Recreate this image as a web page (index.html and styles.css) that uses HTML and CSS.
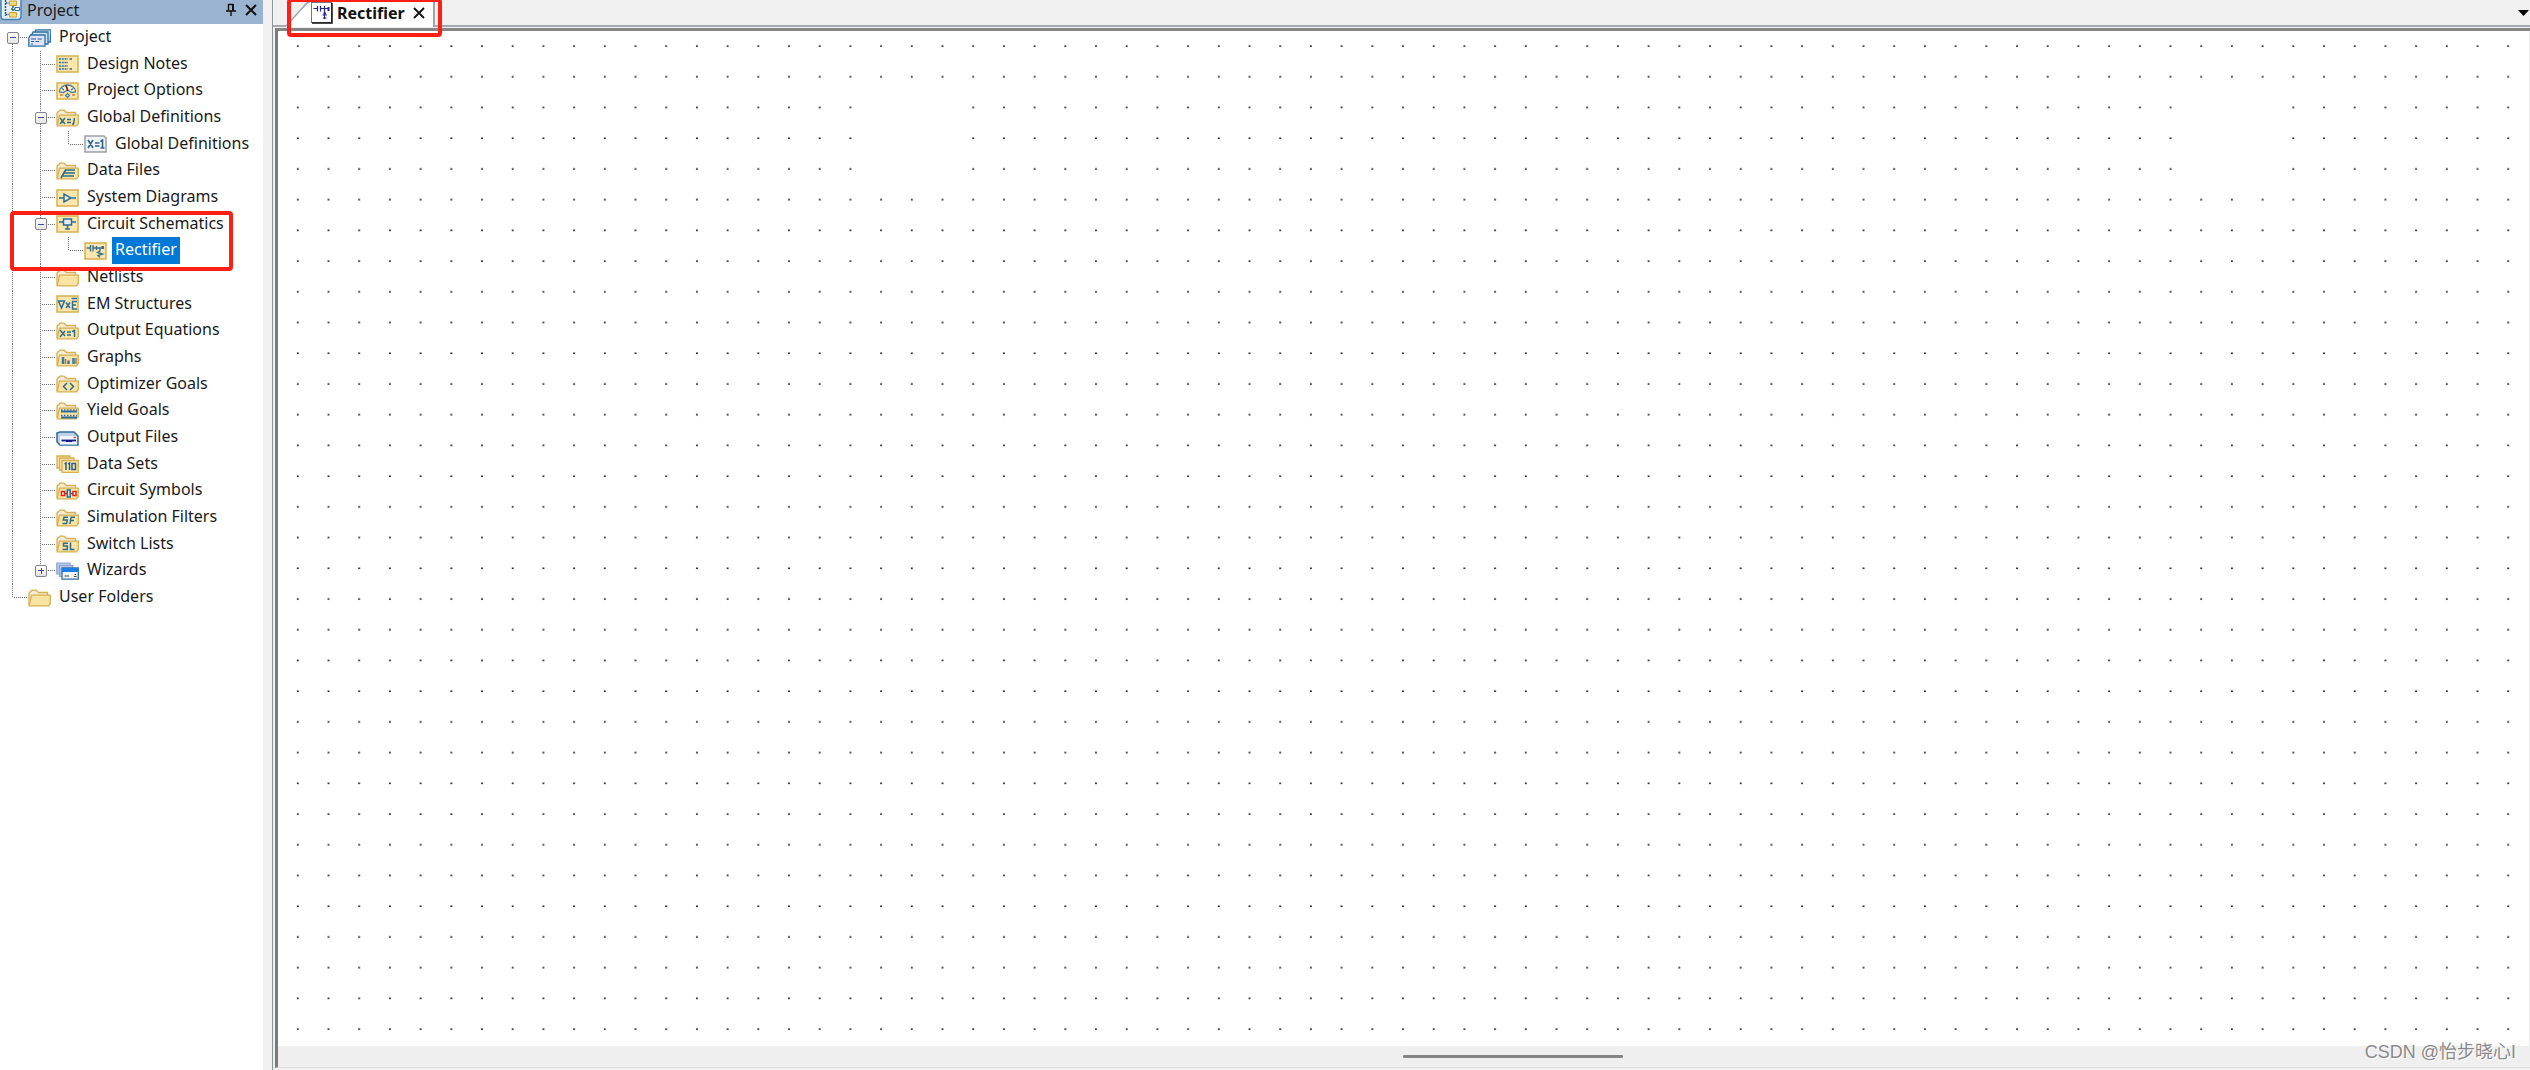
FILE: index.html
```html
<!DOCTYPE html>
<html lang="en">
<head>
<meta charset="utf-8">
<title>Project - Rectifier</title>
<link rel="stylesheet" href="styles.css">
</head>
<body>
<svg class="sprite" aria-hidden="true">
  <symbol id="box" viewBox="0 0 23 18">
    <rect x="1" y="1" width="21" height="16" fill="#fbe6ad" stroke="#d6b052" stroke-width="1.5"/>
  </symbol>
  <symbol id="folder" viewBox="0 0 23 18">
    <path d="M1 16V4L4 1.2H8L10.500 3.500H19.500V8" fill="#f5ead2" stroke="#d6b052" stroke-width="1.3"/>
    <path d="M1.200 16.800L3.500 6.200H22.300V14.500L20.500 16.900Z" fill="#fbe3a4" stroke="#d6b052" stroke-width="1.3"/>
  </symbol>
  <symbol id="project" viewBox="0 0 23 18">
    <g fill="#cfe2f3" stroke="#2d6f9f" stroke-width="1.3">
      <path d="M6 4.500L8 .8H23L22.300 13H8Z"/>
      <path d="M3 7L5 3H20V15H5Z"/>
      <path d="M.8 9L2.500 6H17L17 17.200H.8Z" fill="#dfe3fb"/>
    </g>
    <path d="M3 10H8M9.500 10H14M3 12.500H6M7.500 12.500H11M3 15H5" stroke="#2d5f9f" stroke-width="1.2"/>
  </symbol>
  <symbol id="notes" viewBox="0 0 23 18">
    <use href="#box"/>
    <path d="M3 4H12M3 7.500H12M3 11H12M3 14H12" stroke="#2f6d8f" stroke-width="1.600" stroke-dasharray="2 .8"/>
    <path d="M13.500 4H16M13.500 14H16" stroke="#2f6d8f" stroke-width="1.400"/>
  </symbol>
  <symbol id="gauge" viewBox="0 0 23 18">
    <use href="#box"/>
    <path d="M3.500 10A8 7 0 0 1 19.500 10L15.500 10.500 11.500 8 7.500 10.500Z" fill="#fff4d2" stroke="#4a7f99" stroke-width="1.300"/>
    <path d="M10 3.500L12 9" stroke="#7a1f12" stroke-width="1.800"/>
    <path d="M6 6.500L8 8M17 6.500L15 8" stroke="#2f6d8f" stroke-width="1.300"/>
    <path d="M4 13H7M16 13H19" stroke="#df7b45" stroke-width="1.700"/>
    <path d="M11.500 11.500L13.500 13.500 11.500 15.500 9.500 13.500Z" fill="none" stroke="#3c7f9d" stroke-width="1.200"/>
  </symbol>
  <symbol id="folder-eq" viewBox="0 0 23 18">
    <use href="#folder"/>
    <path d="M4 9L9 15M9 9L4 15M11 10.500H15M11 13.500H15M18.500 9L17.500 15H16" fill="none" stroke="#2b6d8c" stroke-width="1.500"/>
  </symbol>
  <symbol id="eq" viewBox="0 0 23 18">
    <path d="M1 1H20L22 3V17H1Z" fill="#f3f4f5" stroke="#9c9ea0" stroke-width="1.500"/>
    <path d="M4 5L9 13M9 5L4 13M11 8H15.500M11 11H15.500M16.500 6.500L18.500 5V13M16.500 13H20.500" fill="none" stroke="#2b6590" stroke-width="1.600"/>
  </symbol>
  <symbol id="folder-data" viewBox="0 0 23 18">
    <use href="#folder"/>
    <path d="M5 16L9.500 8H19M8 11H19M7 14H18" fill="none" stroke="#2b6d8c" stroke-width="1.700"/>
  </symbol>
  <symbol id="system" viewBox="0 0 23 18">
    <use href="#box"/>
    <path d="M3 9H8M15 9H20M8 5V13L15 9Z" fill="#fff0bf" stroke="#2b6d9c" stroke-width="1.500"/>
  </symbol>
  <symbol id="circuit" viewBox="0 0 23 18">
    <use href="#box"/>
    <path d="M3 7H20M11.500 9V14M9 14H14" stroke="#2b6d9c" stroke-width="1.500"/>
    <rect x="7.500" y="4" width="8" height="6" fill="#e8ecef" stroke="#2b6d9c" stroke-width="1.500"/>
  </symbol>
  <symbol id="schematic" viewBox="0 0 23 18">
    <use href="#box"/>
    <path d="M2.500 6H6.500M6.500 3V9.500M9 3V9.500M9 6H13M12.500 4V8M13 6H18M16 6V9L13.500 10.500 18.500 12 14 13.500 16 15.500" fill="none" stroke="#3d6f8c" stroke-width="1.400"/>
    <rect x="17.500" y="4" width="2.500" height="3" fill="#3d6f8c"/>
  </symbol>
  <symbol id="em" viewBox="0 0 23 18">
    <use href="#box"/>
    <path d="M2.500 6H8.500L5.500 13ZM10 7.500L14 13M14 7.500L10 13M21 6.500H16.500V14H21M16.500 10H20M15.500 3.500H21" fill="none" stroke="#2b6d9c" stroke-width="1.500"/>
  </symbol>
  <symbol id="folder-out" viewBox="0 0 23 18">
    <use href="#folder"/>
    <path d="M4 8L9 14M9 9L4 15M11 10H15M11 13H15M16 9.500L18.500 8.500V15" fill="none" stroke="#2b6d8c" stroke-width="1.500"/>
  </symbol>
  <symbol id="folder-graph" viewBox="0 0 23 18">
    <use href="#folder"/>
    <path d="M7 8V15M17.500 9V15" stroke="#2c7fb5" stroke-width="2.500"/>
    <path d="M9.500 10V15M20 9V15" stroke="#cc6a35" stroke-width="1.500"/>
    <path d="M12.500 11.500V15" stroke="#2c7fb5" stroke-width="2.500"/>
  </symbol>
  <symbol id="folder-opt" viewBox="0 0 23 18">
    <use href="#folder"/>
    <path d="M11 8L7.500 11.500 11 15M14 8L17.500 11.500 14 15" fill="none" stroke="#2b6d8c" stroke-width="1.500"/>
  </symbol>
  <symbol id="folder-yield" viewBox="0 0 23 18">
    <use href="#folder"/>
    <path d="M5 9.500H21M5 15.500H21" stroke="#2b6d9c" stroke-width="2"/>
    <path d="M5 8H21M5 13.500H21" stroke="#2b6d9c" stroke-width="1.500" stroke-dasharray="1.500 1.500"/>
  </symbol>
  <symbol id="drive" viewBox="0 0 23 18">
    <path d="M1 4L4 3H18L22 7V16H4L1 13Z" fill="#b9d2e8" stroke="#35699c" stroke-width="1.500"/>
    <path d="M4 7H21V15.500H4Z" fill="#f1f4fb"/>
    <path d="M5.500 11.500H20" stroke="#141a87" stroke-width="1.800"/>
    <path d="M10 11H16V13H10Z" fill="#141a87"/>
    <path d="M17.500 8.500H20" stroke="#c8563a" stroke-width="1.500"/>
  </symbol>
  <symbol id="dataset" viewBox="0 0 23 18">
    <g fill="#fbe6ad" stroke="#d6b052" stroke-width="1.300">
      <path d="M1 1H14V13H1Z"/><path d="M3.500 3H18V15H3.500Z"/><path d="M6 5.500H22.300V17.300H6Z"/>
    </g>
    <path d="M8.500 9L10 8V15M12 9L13.500 8V15M16 8.500H19.500V14.500H16Z" fill="none" stroke="#2b5f80" stroke-width="1.500"/>
  </symbol>
  <symbol id="folder-sym" viewBox="0 0 23 18">
    <use href="#folder"/>
    <path d="M5.500 9.500H8.500V13.500H5.500ZM17 9.500H20V13.500H17Z" fill="#fff" stroke="#ee1c12" stroke-width="1.500"/>
    <path d="M9 11.500H11M14.500 11.500H17" stroke="#ee1c12" stroke-width="1.500"/>
    <path d="M11.300 8H14.200V15H11.300Z" fill="#e8f2f4" stroke="#226f88" stroke-width="1.500"/>
  </symbol>
  <symbol id="folder-sf" viewBox="0 0 23 18">
    <use href="#folder"/>
    <path d="M12 8.200H8L7.300 11H11.300L10.600 14.500H6.500M14 15L15 8.200H19M14.500 11.500H18" fill="none" stroke="#2b6d8c" stroke-width="1.500"/>
  </symbol>
  <symbol id="folder-sl" viewBox="0 0 23 18">
    <use href="#folder"/>
    <path d="M12 8.200H7.500V11H11.300V14.500H6.500M14.500 7.500V14.500H18.500" fill="none" stroke="#2b6d8c" stroke-width="1.500"/>
  </symbol>
  <symbol id="wizard" viewBox="0 0 23 18">
    <g fill="#b9c8ea" stroke="#8ba4cf" stroke-width="1.200">
      <path d="M.8 1H14V12H.8Z"/><path d="M3.500 3.500H17V14.500H3.500Z"/>
    </g>
    <path d="M6 6H22.300V17.200H6Z" fill="#f3f3f0" stroke="#356fa3" stroke-width="1.300"/>
    <path d="M6 6H22.300V10H6Z" fill="#1b7fe6"/>
    <path d="M8.500 14H13M18 14.500H20.500M18.500 12.500H20" stroke="#444" stroke-width="1.200"/>
  </symbol>
  <symbol id="app" viewBox="0 0 22 22">
    <rect x="1" y="-3" width="20" height="23.500" rx="3" fill="#e4eff6" stroke="#4585b5" stroke-width="1.500"/>
    <path d="M5.500 1V17M5.500 4H9M5.500 15.500H9M13 7V12M11 10H15" fill="none" stroke="#2b5f80" stroke-width="1.500" stroke-dasharray="2 1"/>
    <path d="M9.500 2H16.500V6.500H9.500ZM9.500 13.500H16.500V18H9.500Z" fill="#f8d777" stroke="#cf9f39"/>
    <path d="M15 8.500H19.500V11.500H15Z" fill="#fff" stroke="#3a7396"/>
  </symbol>
</svg>

<div class="app">
  <aside class="panel">
    <header class="panel-head">
      <svg class="app-icon" aria-hidden="true"><use href="#app"/></svg>
      <h1 class="panel-title">Project</h1>
      <button class="tool" aria-label="Pin panel">
        <svg width="10" height="14" viewBox="0 0 10 14"><path d="M2.500 1V8M2.500 1.500H7.500M0 8H10M5 8V13" fill="none" stroke="#111" stroke-width="1.400"/><path d="M7 1V8" stroke="#111" stroke-width="2"/></svg>
      </button>
      <button class="tool" aria-label="Close panel">
        <svg width="12" height="12" viewBox="0 0 12 12"><path d="M1 1L11 11M11 1L1 11" stroke="#111" stroke-width="2"/></svg>
      </button>
    </header>
    <ul class="tree">
      <li><span class="cell start"><button class="toggle" aria-label="Collapse Project"></button></span><svg class="icon"><use href="#project"/></svg><a href="#project-root">Project</a></li>
      <li><span class="cell line"></span><span class="cell line branch"></span><svg class="icon"><use href="#notes"/></svg><a href="#notes-item">Design Notes</a></li>
      <li><span class="cell line"></span><span class="cell line branch"></span><svg class="icon"><use href="#gauge"/></svg><a href="#options">Project Options</a></li>
      <li><span class="cell line"></span><span class="cell line branch"><button class="toggle" aria-label="Collapse Global Definitions"></button></span><svg class="icon"><use href="#folder-eq"/></svg><a href="#globals">Global Definitions</a></li>
      <li><span class="cell line"></span><span class="cell line"></span><span class="cell corner"></span><svg class="icon"><use href="#eq"/></svg><a href="#global-defs">Global Definitions</a></li>
      <li><span class="cell line"></span><span class="cell line branch"></span><svg class="icon"><use href="#folder-data"/></svg><a href="#data">Data Files</a></li>
      <li><span class="cell line"></span><span class="cell line branch"></span><svg class="icon"><use href="#system"/></svg><a href="#diagrams">System Diagrams</a></li>
      <li><span class="cell line"></span><span class="cell line branch"><button class="toggle" aria-label="Collapse Circuit Schematics"></button></span><svg class="icon"><use href="#circuit"/></svg><a href="#schematics">Circuit Schematics</a></li>
      <li><span class="cell line"></span><span class="cell line"></span><span class="cell corner"></span><svg class="icon"><use href="#schematic"/></svg><a class="selected" href="#rectifier">Rectifier</a></li>
      <li><span class="cell line"></span><span class="cell line branch"></span><svg class="icon"><use href="#folder"/></svg><a href="#netlists">Netlists</a></li>
      <li><span class="cell line"></span><span class="cell line branch"></span><svg class="icon"><use href="#em"/></svg><a href="#em-structures">EM Structures</a></li>
      <li><span class="cell line"></span><span class="cell line branch"></span><svg class="icon"><use href="#folder-out"/></svg><a href="#equations">Output Equations</a></li>
      <li><span class="cell line"></span><span class="cell line branch"></span><svg class="icon"><use href="#folder-graph"/></svg><a href="#graphs">Graphs</a></li>
      <li><span class="cell line"></span><span class="cell line branch"></span><svg class="icon"><use href="#folder-opt"/></svg><a href="#optimizer">Optimizer Goals</a></li>
      <li><span class="cell line"></span><span class="cell line branch"></span><svg class="icon"><use href="#folder-yield"/></svg><a href="#yield">Yield Goals</a></li>
      <li><span class="cell line"></span><span class="cell line branch"></span><svg class="icon"><use href="#drive"/></svg><a href="#output-files">Output Files</a></li>
      <li><span class="cell line"></span><span class="cell line branch"></span><svg class="icon"><use href="#dataset"/></svg><a href="#data-sets">Data Sets</a></li>
      <li><span class="cell line"></span><span class="cell line branch"></span><svg class="icon"><use href="#folder-sym"/></svg><a href="#symbols">Circuit Symbols</a></li>
      <li><span class="cell line"></span><span class="cell line branch"></span><svg class="icon"><use href="#folder-sf"/></svg><a href="#filters">Simulation Filters</a></li>
      <li><span class="cell line"></span><span class="cell line branch"></span><svg class="icon"><use href="#folder-sl"/></svg><a href="#switches">Switch Lists</a></li>
      <li><span class="cell line"></span><span class="cell corner"><button class="toggle closed" aria-label="Expand Wizards"></button></span><svg class="icon"><use href="#wizard"/></svg><a href="#wizards">Wizards</a></li>
      <li><span class="cell corner"></span><svg class="icon"><use href="#folder"/></svg><a href="#user">User Folders</a></li>
    </ul>
    <div class="mark mark-tree"></div>
  </aside>

  <main class="workspace">
    <nav class="tabs">
      <div class="tab">
        <svg class="tab-slope" width="26" height="27" viewBox="0 0 26 27" aria-hidden="true"><path d="M1 27L23 3L26 2V27Z" fill="#fff"/><path d="M0 26H2L23 3L26 2" fill="none" stroke="#a0a4ac" stroke-width="1.500"/></svg>
        <div class="tab-body">
          <svg width="22" height="22" viewBox="0 0 22 22" aria-hidden="true"><rect x=".5" y=".5" width="20" height="20" fill="#fff" stroke="#777"/><path d="M21 1V21H1" fill="none" stroke="#111" stroke-width="1.500"/><path d="M2.500 6.500H6.500M6.500 4V9.500M9.500 4V9.500M9.500 6.500H18M13.500 4V17M11.500 13H16M12 16H15.500" fill="none" stroke="#26269b" stroke-width="1.200"/><path d="M16.500 5H18.500V9H16.500ZM12.500 10.500H15V12.500H12.500Z" fill="#26269b"/></svg>
          <a class="tab-name" href="#rectifier">Rectifier</a>
          <button class="tool" aria-label="Close Rectifier"><svg width="12" height="12" viewBox="0 0 12 12"><path d="M1 1L11 11M11 1L1 11" stroke="#111" stroke-width="1.800"/></svg></button>
        </div>
      </div>
      <button class="tool tab-list" aria-label="Open documents"><svg width="11" height="6" viewBox="0 0 11 6"><path d="M0 0H11L5.500 6Z"/></svg></button>
    </nav>
    <div class="mark mark-tab"></div>
    <section class="editor">
      <svg class="grid" aria-label="Schematic grid">
        <defs>
          <pattern id="dots" x="4" y="0" width="30.700" height="30.720" patternUnits="userSpaceOnUse">
            <rect x="15" y="14.300" width="1.600" height="1.600" fill="#000"/>
          </pattern>
        </defs>
        <rect width="100%" height="100%" fill="url(#dots)"/>
        <path d="M588 61H681V154H588ZM1908 61H2001V154H1908Z" fill="#fff"/>
      </svg>
      <div class="scrollbar"><div class="thumb"></div></div>
    </section>
    <p class="credit">CSDN @怡步晓心I</p>
  </main>
</div>
</body>
</html>
```
FILE: styles.css
```css
* { box-sizing: border-box; }

body {
  margin: 0;
  background: #f0f0f0;
  color: #1a1a1a;
  font: 16px/24px "Noto Sans", "Noto Sans CJK SC", sans-serif;
}

.sprite { display: none; }

.app {
  display: flex;
  height: 100vh;
  overflow: hidden;
}

/* Project browser */
.panel {
  position: relative;
  flex: 0 0 263px;
  background: #fff;
}

.panel-head {
  display: flex;
  align-items: center;
  gap: 5px;
  height: 24px;
  padding: 0 6px 4px 0;
  background: #9ab3d0;
}

.app-icon {
  width: 22px;
  height: 22px;
}

.panel-title {
  flex: 1;
  margin: 0;
  font-size: 16px;
  font-weight: 400;
  line-height: 20px;
}

.tool {
  display: flex;
  align-items: center;
  justify-content: center;
  padding: 0;
  border: 0;
  background: none;
}

.panel-head .tool + .tool { margin-left: 4px; }

.tree {
  margin: 0;
  padding: 0;
  list-style: none;
}

.tree li {
  display: flex;
  align-items: center;
  height: 27px;
}

.tree li:nth-child(3n + 2) { height: 26px; }

.cell {
  --dots-v: repeating-linear-gradient(#777 0 1px, #eee 1px 2px);
  --dots-h: repeating-linear-gradient(90deg, #777 0 1px, #eee 1px 2px);
  display: flex;
  align-items: center;
  align-self: stretch;
  width: 28px;
  padding-left: 7px;
  background-repeat: no-repeat;
}

.line {
  background-image: var(--dots-v);
  background-position: 12px 0;
  background-size: 1px 100%;
}

.branch {
  background-image: var(--dots-v), var(--dots-h);
  background-position: 12px 0, 14px 13px;
  background-size: 1px 100%, 13px 1px;
}

.corner {
  background-image: var(--dots-v), var(--dots-h);
  background-position: 12px 0, 14px 13px;
  background-size: 1px 14px, 13px 1px;
}

.start {
  background-image: var(--dots-v), var(--dots-h);
  background-position: 12px 14px, 14px 13px;
  background-size: 1px 13px, 13px 1px;
}

.toggle {
  width: 12px;
  height: 12px;
  padding: 0;
  border: 1px solid #858585;
  border-radius: 2px;
  background:
    linear-gradient(#3a519c, #3a519c) center / 6px 1px no-repeat,
    linear-gradient(#fff, #e4e4e4);
}

.toggle.closed {
  background:
    linear-gradient(#3a519c, #3a519c) center / 6px 1px no-repeat,
    linear-gradient(#3a519c, #3a519c) center / 1px 6px no-repeat,
    linear-gradient(#fff, #e4e4e4);
}

.icon {
  width: 23px;
  height: 18px;
  margin-right: 5px;
}

.tree a {
  align-self: stretch;
  padding: 0 3px;
  color: inherit;
  line-height: 25px;
  text-decoration: none;
}

.tree .selected {
  background: #0078d7;
  color: #fff;
}

/* Document area */
.workspace {
  position: relative;
  display: flex;
  flex: 1;
  flex-direction: column;
  min-width: 0;
  margin-left: 9px;
  padding-bottom: 2px;
  border-left: 1px solid #8f949e;
}

.tabs {
  display: flex;
  justify-content: space-between;
  height: 27px;
  padding-left: 11px;
  border-bottom: 2px solid #a5a9b2;
}

.tab {
  display: flex;
  height: 27px;
}

.tab-body {
  display: flex;
  align-items: center;
  height: 27px;
  padding: 0 8px 2px 1px;
  border-right: 2px solid #a0a4ac;
  background: #fff;
}

.tab-name {
  margin: 0 8px 0 4px;
  color: #111;
  font-weight: 700;
  text-decoration: none;
}

.tab-list { padding-right: 1px; }

.editor {
  display: flex;
  flex: 1;
  flex-direction: column;
  min-height: 0;
  margin: 1px 0 0 2px;
  border-top: 3px solid #858585;
  border-left: 3px solid #7b7b7b;
  border-bottom: 1px solid #dedede;
}

.grid {
  flex: 1;
  width: 100%;
  min-height: 0;
  background: #fff;
  border-right: 1px solid #eee;
}

.scrollbar {
  display: flex;
  align-items: center;
  justify-content: center;
  height: 21px;
  background: #efefef;
}

.thumb {
  width: 220px;
  height: 3px;
  margin-left: 218px;
  border-radius: 1px;
  background: #858585;
}

/* Red callouts drawn over the panels */
.mark {
  position: absolute;
  border: 4px solid #ff2013;
  border-radius: 4px;
  pointer-events: none;
}

.mark-tree {
  top: 211px;
  left: 10px;
  width: 223px;
  height: 60px;
}

.mark-tab {
  top: -2px;
  left: 14px;
  width: 155px;
  height: 39px;
}

.credit {
  position: absolute;
  right: 14px;
  bottom: 6px;
  margin: 0;
  color: #8a8a8a;
  font-family: "Liberation Sans", "Noto Sans CJK SC", sans-serif;
  font-size: 18px;
  text-shadow: 1px 1px 0 #fff;
}
```
